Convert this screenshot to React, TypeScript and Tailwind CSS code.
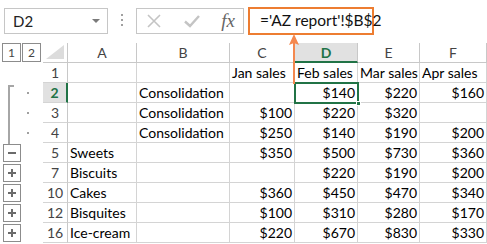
import React from 'react';

const cols = ['A', 'B', 'C', 'D', 'E', 'F'];
const widths = ['w-[69px]', 'w-[93px]', 'w-[65px]', 'w-[63px]', 'w-[62px]', 'w-[67px]'];

type Row = { n: number; cells: string[]; gutter: 'dot' | 'minus' | 'plus' | 'none' };

const rows: Row[] = [
  { n: 1, gutter: 'none', cells: ['', '', 'Jan sales', 'Feb sales', 'Mar sales', 'Apr sales'] },
  { n: 2, gutter: 'dot', cells: ['', 'Consolidation', '', '$140', '$220', '$160'] },
  { n: 3, gutter: 'dot', cells: ['', 'Consolidation', '$100', '$220', '$320', ''] },
  { n: 4, gutter: 'dot', cells: ['', 'Consolidation', '$250', '$140', '$190', '$200'] },
  { n: 5, gutter: 'minus', cells: ['Sweets', '', '$350', '$500', '$730', '$360'] },
  { n: 7, gutter: 'plus', cells: ['Biscuits', '', '', '$220', '$190', '$200'] },
  { n: 10, gutter: 'plus', cells: ['Cakes', '', '$360', '$450', '$470', '$340'] },
  { n: 12, gutter: 'plus', cells: ['Bisquites', '', '$100', '$310', '$280', '$170'] },
  { n: 16, gutter: 'plus', cells: ['Ice-cream', '', '$220', '$670', '$830', '$330'] },
];

const GutterButton = ({ kind }: { kind: 'minus' | 'plus' }) => (
  <div className="w-[18px] h-[18px] border border-[#8c8c8c] bg-white flex items-center justify-center">
    <svg width="10" height="10" viewBox="0 0 10 10">
      <rect x="1" y="4" width="8" height="2" fill="#6b6b6b" />
      {kind === 'plus' && <rect x="4" y="1" width="2" height="8" fill="#6b6b6b" />}
    </svg>
  </div>
);

const TopBar = () => (
  <div className="h-[43px] flex items-start pt-[8px] relative">
    {/* name box */}
    <div className="ml-[4px] w-[104px] h-[26px] border border-[#c6c6c6] flex items-center justify-between pl-[8px] pr-[7px]">
      <span className="text-[15px] text-[#222]">D2</span>
      <svg width="8" height="5" viewBox="0 0 8 5">
        <path d="M0 0 L8 0 L4 4 Z" fill="#7a7a7a" />
      </svg>
    </div>
    {/* grip dots */}
    <div className="ml-[13px] mt-[6px] flex flex-col gap-[3px]">
      <span className="w-[2px] h-[2px] bg-[#a0a0a0]" />
      <span className="w-[2px] h-[2px] bg-[#a0a0a0]" />
      <span className="w-[2px] h-[2px] bg-[#a0a0a0]" />
    </div>
    {/* cancel / enter / fx */}
    <div className="ml-[13px] w-[108px] h-[26px] border border-[#c6c6c6] flex items-center pl-[9px] pr-[8px] justify-between">
      <svg width="16" height="16" viewBox="0 0 16 16">
        <path d="M2 2 L14 14 M14 2 L2 14" stroke="#c4c4c4" strokeWidth="1.6" />
      </svg>
      <svg width="18" height="16" viewBox="0 0 18 16">
        <path d="M2 8.5 L7 13 L16 3" stroke="#c4c4c4" strokeWidth="2.4" fill="none" />
      </svg>
      <span className="font-['Liberation_Serif',serif] italic text-[19px] text-[#666] leading-none -mt-[2px]">fx</span>
    </div>
    {/* formula */}
    <div className="ml-[4px] -mt-[1px] w-[126px] h-[28px] border-2 border-[#ed7d31] flex items-center pl-[10px]">
      <span className="text-[15.5px] text-[#111] whitespace-nowrap">='AZ report'!$B$2</span>
    </div>
  </div>
);

export default function App() {
  return (
    <div className="w-[487px] h-[244px] bg-white overflow-hidden relative font-['Lato','Noto_Sans',sans-serif]">
      <TopBar />

      {/* header row */}
      <div className="flex h-[20px]">
        <div className="w-[43px] flex items-start pl-[2px] gap-[1px]">
          <div className="w-[19px] h-[19px] border border-[#8c8c8c] flex items-center justify-center text-[12px] text-[#444]">1</div>
          <div className="w-[19px] h-[19px] border border-[#8c8c8c] flex items-center justify-center text-[12px] text-[#444]">2</div>
        </div>
        <div className="w-[25px] border-b border-r border-[#c8c8c8] flex items-end justify-end pb-[3px] pr-[3px]">
          <svg width="18" height="14" viewBox="0 0 18 14">
            <path d="M18 0 L18 14 L0 14 Z" fill="#dcdcdc" />
          </svg>
        </div>
        {cols.map((c, i) => (
          <div
            key={c}
            className={`${widths[i]} shrink-0 flex items-center justify-center text-[14px] border-r ${
              c === 'D'
                ? 'bg-[#e1e1e1] text-[#217346] font-bold border-b-2 border-b-[#217346] border-r-[#c8c8c8]'
                : 'text-[#444] border-b border-[#c8c8c8]'
            }`}
          >
            {c}
          </div>
        ))}
      </div>

      {/* data rows */}
      {rows.map((r) => (
        <div key={r.n} className="flex h-[20px]">
          <div className="w-[43px] flex items-center pl-[3px]">
            {r.gutter === 'dot' && <span className="ml-[24px] w-[2px] h-[2px] bg-[#a0a0a0]" />}
            {(r.gutter === 'minus' || r.gutter === 'plus') && <GutterButton kind={r.gutter} />}
          </div>
          <div
            className={`w-[25px] flex items-center justify-center text-[14px] border-b border-[#d4d4d4] ${
              r.n === 2
                ? 'bg-[#e1e1e1] text-[#217346] font-bold border-r-2 border-r-[#217346]'
                : 'text-[#444] border-r border-r-[#c8c8c8]'
            }`}
          >
            {r.n}
          </div>
          {r.cells.map((v, i) => (
            <div
              key={i}
              className={`${widths[i]} shrink-0 flex items-center px-[2px] text-[14px] text-black whitespace-nowrap border-r border-b border-[#d4d4d4] ${
                v.startsWith('$') ? 'justify-end' : 'justify-start'
              }`}
            >
              {v}
            </div>
          ))}
        </div>
      ))}

      {/* outline bracket for rows 2-4 */}
      <div className="absolute left-[8px] top-[85px] w-[6px] h-[59px] border-l-2 border-t-2 border-[#a6a6a6]" />

      {/* selected cell D2 */}
      <div className="absolute left-[294px] top-[82px] w-[65px] h-[22px] border-2 border-[#217346]">
        <span className="absolute -right-[4px] -bottom-[4px] w-[5px] h-[5px] bg-[#217346] border border-white" />
      </div>

      {/* arrow pointing from cell to formula */}
      <svg className="absolute left-[287px] top-[34px]" width="14" height="50" viewBox="0 0 14 50">
        <path d="M7 0 L12 11 L7 9 L2 11 Z" fill="#f4884f" />
        <rect x="6" y="8" width="2" height="42" fill="#f4884f" />
      </svg>
    </div>
  );
}
